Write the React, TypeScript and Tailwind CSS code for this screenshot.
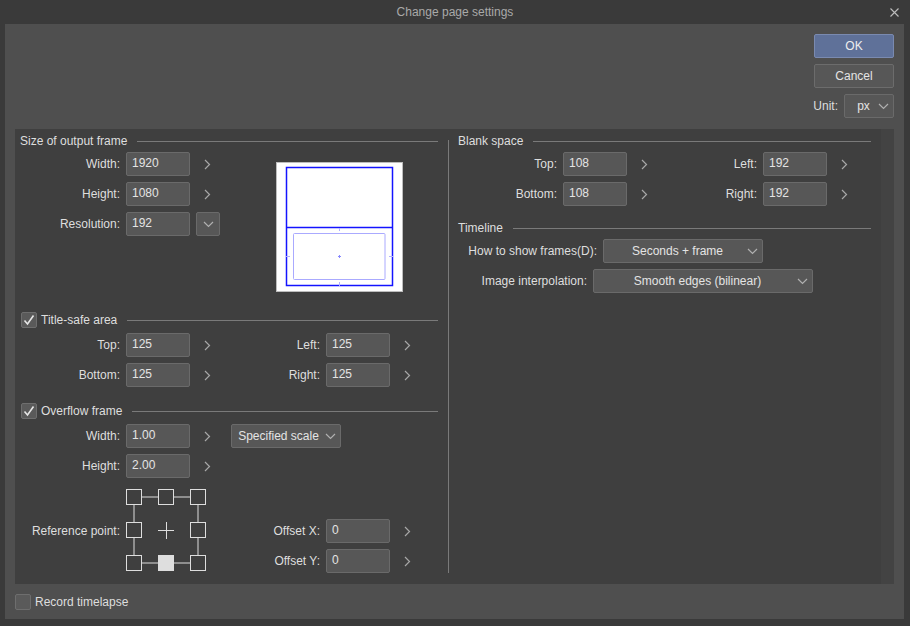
import React from 'react';

const font = { fontFamily: '"Liberation Sans", Arial, sans-serif' };

const Chevron: React.FC = () => (
  <svg width="7" height="11" viewBox="0 0 7 11" className="ml-[14px] shrink-0">
    <path d="M1 1 L5.5 5.5 L1 10" fill="none" stroke="#a8a8a8" strokeWidth="1.2" />
  </svg>
);

const DownArrow: React.FC = () => (
  <svg width="11" height="7" viewBox="0 0 11 7" className="shrink-0">
    <path d="M1 1 L5.5 5.5 L10 1" fill="none" stroke="#b0b0b0" strokeWidth="1.2" />
  </svg>
);

const Input: React.FC<{ value: string }> = ({ value }) => (
  <div className="flex h-[24px] w-[64px] shrink-0 items-center rounded-[2px] border border-[#6a6a6a] bg-[#575757] pb-[3px] pl-[5px] text-[12px] text-[#e4e4e4]">
    {value}
  </div>
);

type FieldProps = { label: string; value: string; labelW: string; arrow?: boolean };

const Field: React.FC<FieldProps> = ({ label, value, labelW, arrow = true }) => (
  <div className="flex h-[24px] w-[200px] shrink-0 items-center">
    <span className={`${labelW} shrink-0 pr-[6px] text-right`}>{label}</span>
    <Input value={value} />
    {arrow && <Chevron />}
  </div>
);

const Select: React.FC<{ value: string; className: string }> = ({ value, className }) => (
  <div
    className={`flex h-[24px] shrink-0 items-center rounded-[2px] border border-[#6a6a6a] bg-[#575757] pr-[4px] text-[12px] text-[#e4e4e4] ${className}`}
  >
    <span className="flex-1 text-center">{value}</span>
    <DownArrow />
  </div>
);

const Checkbox: React.FC<{ checked?: boolean }> = ({ checked }) => (
  <div className="flex h-[16px] w-[16px] shrink-0 items-center justify-center rounded-[2px] border border-[#6e6e6e] bg-[#5a5a5a]">
    {checked && (
      <svg width="12" height="12" viewBox="0 0 12 12">
        <path d="M1.5 6.5 L4.5 10 L10.5 1.5" fill="none" stroke="#e6e6e6" strokeWidth="1.6" />
      </svg>
    )}
  </div>
);

const Header: React.FC<{ title: string; checkbox?: boolean; className?: string }> = ({
  title,
  checkbox,
  className = '',
}) => (
  <div className={`flex h-[16px] items-center pr-[10px] ${className}`}>
    {checkbox && <Checkbox checked />}
    <span className={checkbox ? 'ml-[4px]' : ''}>{title}</span>
    <div className="ml-[10px] h-px flex-1 bg-[#7a7a7a]" />
  </div>
);

const Preview: React.FC = () => (
  <svg width="127" height="130" viewBox="0 0 127 130" className="shrink-0">
    <rect x="0.5" y="0.5" width="126" height="129" fill="#ffffff" stroke="#bdbdbd" />
    <rect x="10.5" y="5.5" width="106" height="118" fill="none" stroke="#1414ff" strokeWidth="1.5" />
    <line x1="10.5" y1="65.5" x2="116.5" y2="65.5" stroke="#1414ff" strokeWidth="1.5" />
    <rect x="17.5" y="71.5" width="91.5" height="46" rx="1" fill="none" stroke="#aaaaff" />
    <line x1="63.5" y1="66" x2="63.5" y2="69" stroke="#b0b0ff" />
    <line x1="63.5" y1="120" x2="63.5" y2="124" stroke="#b0b0ff" />
    <line x1="10" y1="94.5" x2="14" y2="94.5" stroke="#b0b0ff" />
    <line x1="113" y1="94.5" x2="117" y2="94.5" stroke="#b0b0ff" />
    <line x1="62" y1="94.5" x2="65" y2="94.5" stroke="#8888ff" />
    <line x1="63.5" y1="93" x2="63.5" y2="96" stroke="#8888ff" />
  </svg>
);

const RefGrid: React.FC = () => {
  const xs = [0, 32, 64];
  const ys = [0, 33, 66];
  const c = '#dedede';
  return (
    <svg width="81" height="83" viewBox="0 0 81 83" className="shrink-0">
      <line x1="16" y1="8" x2="64" y2="8" stroke={c} />
      <line x1="16" y1="74" x2="64" y2="74" stroke={c} />
      <line x1="8" y1="16" x2="8" y2="66" stroke={c} />
      <line x1="72" y1="16" x2="72" y2="66" stroke={c} />
      {ys.map((y, r) =>
        xs.map((x, i) =>
          r === 1 && i === 1 ? null : (
            <rect
              key={`${r}-${i}`}
              x={x + 0.5}
              y={y + 0.5}
              width="15"
              height="15"
              fill={r === 2 && i === 1 ? c : '#3f3f3f'}
              stroke={c}
            />
          ),
        ),
      )}
      <line x1="32" y1="41.5" x2="48" y2="41.5" stroke={c} />
      <line x1="40.5" y1="33" x2="40.5" y2="50" stroke={c} />
    </svg>
  );
};

export default function App() {
  return (
    <div className="flex h-[626px] w-[910px] flex-col bg-[#3a3a3a] text-[12px] text-[#dedede]" style={font}>
      {/* title bar */}
      <div className="relative flex h-[24px] shrink-0 items-center justify-center text-[12px] text-[#a9a9a9]">
        Change page settings
        <svg width="9" height="9" viewBox="0 0 9 9" className="absolute right-[11px] top-[8px]">
          <path d="M0.5 0.5 L8.5 8.5 M8.5 0.5 L0.5 8.5" stroke="#bdbdbd" strokeWidth="1.1" />
        </svg>
      </div>

      <div className="ml-[5px] mr-[6px] flex h-[595px] flex-col bg-[#4f4f4f] px-[10px]">
        {/* top buttons */}
        <div className="flex h-[105px] shrink-0 flex-col items-end pt-[10px]">
          <div className="flex h-[24px] w-[80px] items-center justify-center rounded-[2px] border border-[#7a8ab0] bg-[#5f7199] text-[#eeeeee]">
            OK
          </div>
          <div className="mt-[6px] flex h-[24px] w-[80px] items-center justify-center rounded-[2px] border border-[#6c6c6c] bg-[#575757] text-[#e4e4e4]">
            Cancel
          </div>
          <div className="mt-[6px] flex items-center">
            <span className="mr-[6px]">Unit:</span>
            <Select value="px" className="w-[50px] pl-[4px]" />
          </div>
        </div>

        {/* main panel */}
        <div className="flex h-[455px] shrink-0 bg-[#3f3f3f]">
          {/* left column */}
          <div className="flex w-[433px] shrink-0 flex-col pt-[4px]">
            <Header title="Size of output frame" className="pl-[5px]" />
            <div className="mt-[3px] flex">
              <div className="flex w-[261px] shrink-0 flex-col gap-[6px]">
                <Field label="Width:" value="1920" labelW="w-[111px]" />
                <Field label="Height:" value="1080" labelW="w-[111px]" />
                <div className="flex h-[24px] items-center">
                  <span className="w-[111px] shrink-0 pr-[6px] text-right">Resolution:</span>
                  <Input value="192" />
                  <div className="ml-[6px] flex h-[24px] w-[24px] items-center justify-center rounded-[2px] border border-[#6a6a6a] bg-[#575757]">
                    <DownArrow />
                  </div>
                </div>
              </div>
              <div className="mt-[10px]">
                <Preview />
              </div>
            </div>

            <Header title="Title-safe area" checkbox className="mt-[20px] pl-[6px]" />
            <div className="mt-[5px] flex flex-col gap-[6px]">
              <div className="flex">
                <Field label="Top:" value="125" labelW="w-[111px]" />
                <Field label="Left:" value="125" labelW="w-[111px]" />
              </div>
              <div className="flex">
                <Field label="Bottom:" value="125" labelW="w-[111px]" />
                <Field label="Right:" value="125" labelW="w-[111px]" />
              </div>
            </div>

            <Header title="Overflow frame" checkbox className="mt-[16px] pl-[6px]" />
            <div className="mt-[5px] flex flex-col gap-[6px]">
              <div className="flex items-center">
                <Field label="Width:" value="1.00" labelW="w-[111px]" />
                <Select value="Specified scale" className="ml-[16px] w-[110px]" />
              </div>
              <Field label="Height:" value="2.00" labelW="w-[111px]" />
            </div>
            <div className="mt-[11px] flex">
              <span className="flex w-[111px] shrink-0 items-center justify-end pr-[6px]">Reference point:</span>
              <RefGrid />
              <div className="ml-[14px] mt-[30px] flex flex-col gap-[6px]">
                <Field label="Offset X:" value="0" labelW="w-[105px]" />
                <Field label="Offset Y:" value="0" labelW="w-[105px]" />
              </div>
            </div>
          </div>

          {/* divider */}
          <div className="my-[11px] w-px shrink-0 bg-[#7a7a7a]" />

          {/* right column */}
          <div className="flex flex-1 flex-col pt-[4px]">
            <Header title="Blank space" className="pl-[9px]" />
            <div className="mt-[3px] flex flex-col gap-[6px]">
              <div className="flex">
                <Field label="Top:" value="108" labelW="w-[114px]" />
                <Field label="Left:" value="192" labelW="w-[114px]" />
              </div>
              <div className="flex">
                <Field label="Bottom:" value="108" labelW="w-[114px]" />
                <Field label="Right:" value="192" labelW="w-[114px]" />
              </div>
            </div>
            <Header title="Timeline" className="mt-[14px] pl-[9px]" />
            <div className="mt-[3px] flex flex-col gap-[6px]">
              <div className="flex items-center">
                <span className="w-[154px] shrink-0 pr-[6px] text-right">How to show frames(D):</span>
                <Select value="Seconds + frame" className="w-[160px] pl-[4px]" />
              </div>
              <div className="flex items-center">
                <span className="w-[144px] shrink-0 pr-[6px] text-right">Image interpolation:</span>
                <Select value="Smooth edges (bilinear)" className="w-[220px] pl-[4px]" />
              </div>
            </div>
          </div>

          {/* scroll strip */}
          <div className="w-[13px] shrink-0 bg-[#434343]" />
        </div>

        {/* bottom */}
        <div className="flex flex-1 items-center">
          <Checkbox />
          <span className="ml-[4px]">Record timelapse</span>
        </div>
      </div>
    </div>
  );
}
